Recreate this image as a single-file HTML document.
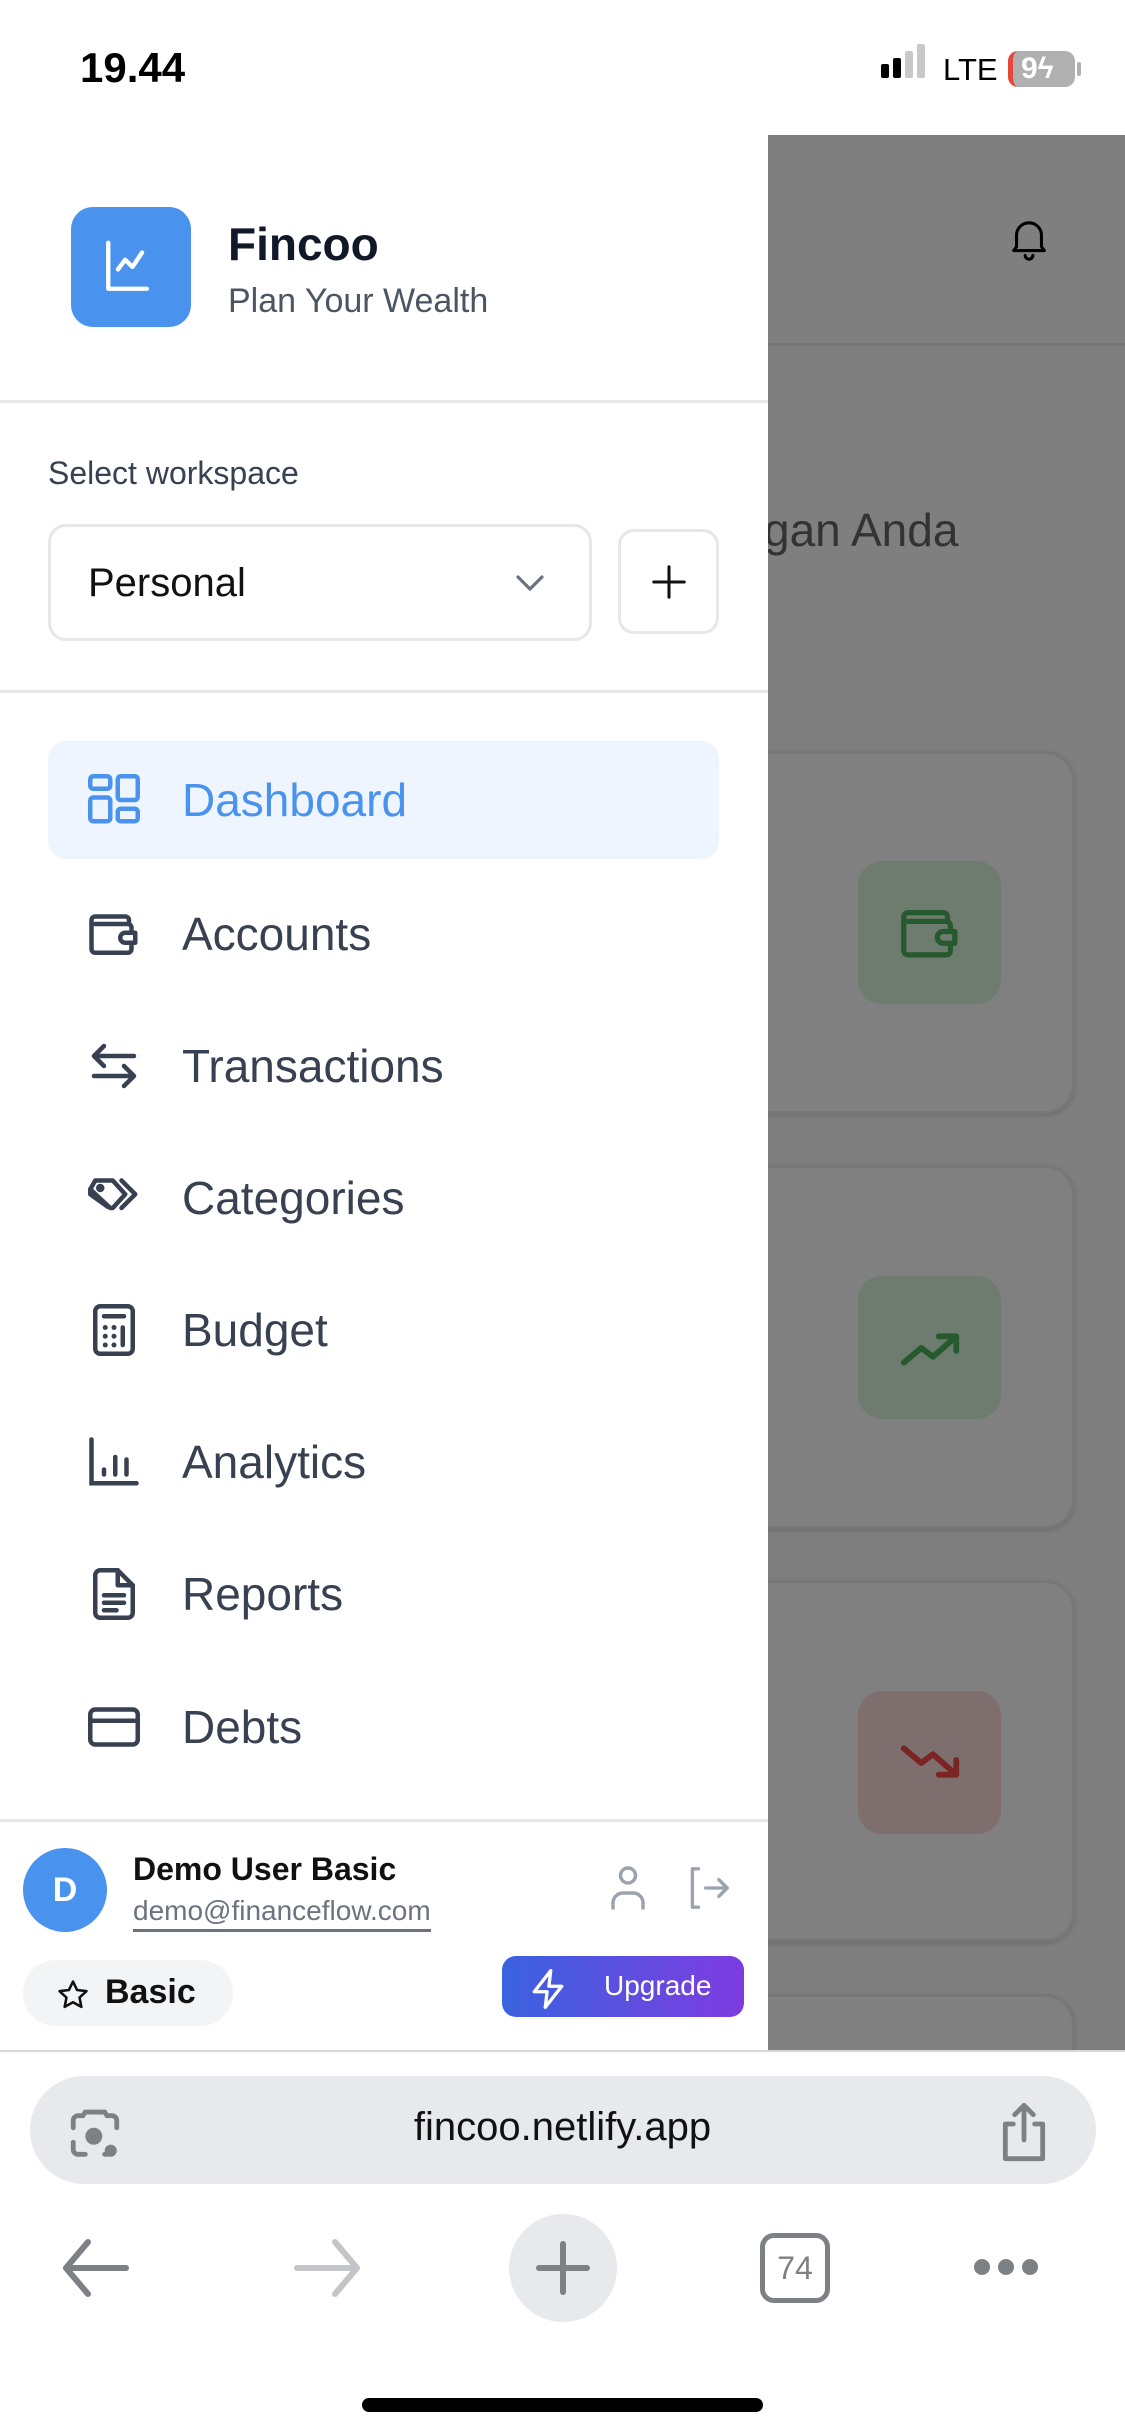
<!DOCTYPE html>
<html><head><meta charset="utf-8"><style>
*{margin:0;padding:0;box-sizing:border-box}
body{width:1125px;height:2436px;position:relative;overflow:hidden;background:#fff;font-family:"Liberation Sans",sans-serif;color:#374151}
.abs{position:absolute}
.gray{left:768px;top:135px;width:357px;height:1916px;background:#7f7f7f;overflow:hidden}
.card{position:absolute;left:-300px;width:607px;background:#808080;border:3px solid #777;border-radius:30px;box-shadow:0 2px 6px rgba(0,0,0,.15)}
.ibox{position:absolute;width:143px;height:143px;border-radius:24px;display:flex;align-items:center;justify-content:center}
.panel{left:0;top:135px;width:768px;height:1916px;background:#fff}
.nav{position:absolute;left:48px;width:671px;height:118px;border-radius:18px;display:flex;align-items:center}
.nav svg{position:absolute;left:36px;width:60px;height:60px}
.nav span{position:absolute;left:134px;font-size:46px;color:#374151}
</style></head><body>
<!-- status bar -->
<div class="abs" style="left:80px;top:44px;font-size:42px;font-weight:bold;color:#000">19.44</div>
<div class="abs" style="left:881px;top:64px;width:8px;height:14px;background:#000;border-radius:2px"></div>
<div class="abs" style="left:893px;top:58px;width:8px;height:20px;background:#000;border-radius:2px"></div>
<div class="abs" style="left:905px;top:51px;width:8px;height:27px;background:#c8c8c8;border-radius:2px"></div>
<div class="abs" style="left:917px;top:44px;width:8px;height:34px;background:#c8c8c8;border-radius:2px"></div>
<div class="abs" style="left:943px;top:52px;font-size:31px;color:#000">LTE</div>
<div class="abs" style="left:1008px;top:51px;width:67px;height:36px;background:#b0b0b0;border-radius:10px;border-left:5px solid #e5483a;color:#fff;font-size:30px;font-weight:bold;line-height:36px;padding-left:8px">9ϟ</div>
<div class="abs" style="left:1077px;top:62px;width:4px;height:14px;background:#b0b0b0;border-radius:2px"></div>

<!-- gray background app -->
<div class="abs gray">
  <div class="abs" style="left:0;top:208px;width:357px;height:3px;background:#777"></div>
  <svg class="abs" style="left:238px;top:80px" width="46" height="52" viewBox="0 0 24 26" fill="none" stroke="#000" stroke-width="1.6" stroke-linecap="round" stroke-linejoin="round"><path d="M4 18h16l-1.5-2V10a6.5 6.5 0 0 0-13 0v6z"/><path d="M10 20.5a2 2 0 0 0 4 0"/></svg>
  <div class="abs" style="left:-4px;top:368px;font-size:46px;color:#333">gan Anda</div>
  <div class="card" style="top:616px;height:363px">
    <div class="ibox" style="left:387px;top:107px;background:#6e7b6f"><svg width="70" height="70" viewBox="0 0 24 24" fill="none" stroke="#265a2e" stroke-width="1.8" stroke-linecap="round" stroke-linejoin="round"><path d="M3 6.5A1.5 1.5 0 0 1 4.5 5h12A1.5 1.5 0 0 1 18 6.5V8H4.5M3 6.5V18a1.5 1.5 0 0 0 1.5 1.5h13A1.5 1.5 0 0 0 19 18v-2.5M19 11v-1.5a1.5 1.5 0 0 0-1.5-1.5"/><path d="M16.5 11.5h4v4h-4a2 2 0 0 1 0-4z"/></svg></div>
  </div>
  <div class="card" style="top:1030px;height:364px">
    <div class="ibox" style="left:387px;top:108px;background:#6e7b6f"><svg width="70" height="70" viewBox="0 0 24 24" fill="none" stroke="#265a2e" stroke-width="2" stroke-linecap="round" stroke-linejoin="round"><path d="M3 17l6-5 4 3 8-7M15 8h6v5"/></svg></div>
  </div>
  <div class="card" style="top:1445px;height:362px">
    <div class="ibox" style="left:387px;top:108px;background:#7e6e6e"><svg width="70" height="70" viewBox="0 0 24 24" fill="none" stroke="#7a2424" stroke-width="2" stroke-linecap="round" stroke-linejoin="round"><path d="M3 7l6 5 4-3 8 7M15 16h6v-5"/></svg></div>
  </div>
  <div class="card" style="top:1859px;height:300px"></div>
</div>

<!-- side panel -->
<div class="abs panel">
  <div class="abs" style="left:71px;top:72px;width:120px;height:120px;border-radius:22px;background:#4993ee">
    <svg class="abs" style="left:30px;top:28px" width="58" height="64" viewBox="0 0 24 26" fill="none" stroke="#fff" stroke-width="1.8" stroke-linecap="round" stroke-linejoin="round"><path d="M3 3v19h16"/><path d="M7 14l3-4 3 3 4-6"/></svg>
  </div>
  <div class="abs" style="left:228px;top:82px;font-size:46px;font-weight:bold;color:#111827">Fincoo</div>
  <div class="abs" style="left:228px;top:147px;font-size:34px;color:#4b5563">Plan Your Wealth</div>
  <div class="abs" style="left:0;top:265px;width:768px;height:3px;background:#e5e7eb"></div>
  <div class="abs" style="left:48px;top:320px;font-size:32px;color:#374151">Select workspace</div>
  <div class="abs" style="left:48px;top:389px;width:544px;height:117px;border:3px solid #e5e7eb;border-radius:18px"></div>
  <div class="abs" style="left:88px;top:426px;font-size:40px;color:#111">Personal</div>
  <svg class="abs" style="left:514px;top:436px" width="32" height="22" viewBox="0 0 16 11" fill="none" stroke="#6b7280" stroke-width="1.6" stroke-linecap="round"><path d="M2 3l6 6 6-6"/></svg>
  <div class="abs" style="left:618px;top:394px;width:101px;height:105px;border:3px solid #e5e7eb;border-radius:16px"></div>
  <svg class="abs" style="left:650px;top:428px" width="38" height="38" viewBox="0 0 20 20" fill="none" stroke="#111" stroke-width="1.6" stroke-linecap="round"><path d="M10 2v16M2 10h16"/></svg>
  <div class="abs" style="left:0;top:555px;width:768px;height:3px;background:#e5e7eb"></div>

  <div class="nav" style="top:606px;background:#eef5fe">
    <svg viewBox="0 0 24 24" fill="none" stroke="#4993ee" stroke-width="1.8"><rect x="2.5" y="2.5" width="8" height="5" rx="1.2"/><rect x="2.5" y="11" width="8" height="9.5" rx="1.2"/><rect x="13.5" y="2.5" width="8" height="9.5" rx="1.2"/><rect x="13.5" y="15.5" width="8" height="5" rx="1.2"/></svg>
    <span style="color:#4993ee">Dashboard</span></div>
  <div class="nav" style="top:740px">
    <svg viewBox="0 0 24 24" fill="none" stroke="#374151" stroke-width="1.8" stroke-linecap="round" stroke-linejoin="round"><path d="M3 6.5A1.5 1.5 0 0 1 4.5 5h12A1.5 1.5 0 0 1 18 6.5V8H4.5M3 6.5V18a1.5 1.5 0 0 0 1.5 1.5h13A1.5 1.5 0 0 0 19 18v-2.5M19 11v-1.5a1.5 1.5 0 0 0-1.5-1.5"/><path d="M16.5 11.5h4v4h-4a2 2 0 0 1 0-4z"/></svg>
    <span>Accounts</span></div>
  <div class="nav" style="top:872px">
    <svg viewBox="0 0 24 24" fill="none" stroke="#374151" stroke-width="1.8" stroke-linecap="round" stroke-linejoin="round"><path d="M20 8H4M8 4L4 8l4 4M4 16h16M16 12l4 4-4 4"/></svg>
    <span>Transactions</span></div>
  <div class="nav" style="top:1004px">
    <svg viewBox="0 0 24 24" fill="none" stroke="#374151" stroke-width="1.8" stroke-linecap="round" stroke-linejoin="round"><path d="M2.5 8.5l2-3.5h7l5 5.5-5 5.5h-1z M2.5 8.5v2l7 5"/><circle cx="6.5" cy="8" r="0.8" fill="#374151"/><path d="M15 5l5.5 5.5L15 16"/></svg>
    <span>Categories</span></div>
  <div class="nav" style="top:1136px">
    <svg viewBox="0 0 24 24" fill="none" stroke="#374151" stroke-width="1.8" stroke-linecap="round" stroke-linejoin="round"><rect x="4.5" y="2.5" width="15" height="19" rx="2"/><path d="M8 6.5h8"/><g fill="#374151" stroke="none"><circle cx="8.5" cy="11" r="1"/><circle cx="12" cy="11" r="1"/><circle cx="8.5" cy="14.5" r="1"/><circle cx="12" cy="14.5" r="1"/><circle cx="8.5" cy="18" r="1"/><circle cx="12" cy="18" r="1"/></g><path d="M15.5 11v7"/></svg>
    <span>Budget</span></div>
  <div class="nav" style="top:1268px">
    <svg viewBox="0 0 24 24" fill="none" stroke="#374151" stroke-width="1.8" stroke-linecap="round"><path d="M3 3v17.5h18M8 17v-2M12.5 17V10M17 17v-6"/></svg>
    <span>Analytics</span></div>
  <div class="nav" style="top:1400px">
    <svg viewBox="0 0 24 24" fill="none" stroke="#374151" stroke-width="1.8" stroke-linecap="round" stroke-linejoin="round"><path d="M13.5 2.5H6.5a2 2 0 0 0-2 2v15a2 2 0 0 0 2 2h11a2 2 0 0 0 2-2v-11z"/><path d="M13.5 2.5v6h6M8 12.5h8M8 15.5h8M8 18.5h5"/></svg>
    <span>Reports</span></div>
  <div class="nav" style="top:1533px">
    <svg viewBox="0 0 24 24" fill="none" stroke="#374151" stroke-width="1.8"><rect x="2.5" y="5" width="19" height="14" rx="2"/><path d="M2.5 9.5h19"/></svg>
    <span>Debts</span></div>

  <div class="abs" style="left:0;top:1684px;width:768px;height:3px;background:#e5e7eb"></div>
  <div class="abs" style="left:23px;top:1713px;width:84px;height:84px;border-radius:50%;background:#4993ee;color:#fff;font-size:34px;font-weight:bold;text-align:center;line-height:84px">D</div>
  <div class="abs" style="left:133px;top:1716px;font-size:32px;font-weight:bold;color:#111">Demo User Basic</div>
  <div class="abs" style="left:133px;top:1760px;font-size:28px;color:#6b7280;border-bottom:3px solid #6b7280;padding-bottom:2px">demo@financeflow.com</div>
  <svg class="abs" style="left:608px;top:1728px" width="40" height="50" viewBox="0 0 16 20" fill="none" stroke="#9ca3af" stroke-width="1.4" stroke-linecap="round"><circle cx="8" cy="5" r="3"/><path d="M2 18v-2a4 4 0 0 1 4-4h4a4 4 0 0 1 4 4v2"/></svg>
  <svg class="abs" style="left:684px;top:1728px" width="48" height="50" viewBox="0 0 20 20" fill="none" stroke="#9ca3af" stroke-width="1.4" stroke-linecap="round" stroke-linejoin="round"><path d="M6 2H3.5v16H6M9 10h9M14.5 6.5L18 10l-3.5 3.5"/></svg>
  <div class="abs" style="left:23px;top:1825px;width:210px;height:66px;border-radius:33px;background:#f3f4f6"></div>
  <svg class="abs" style="left:56px;top:1843px" width="34" height="34" viewBox="0 0 24 24" fill="none" stroke="#111" stroke-width="1.8" stroke-linejoin="round"><path d="M12 2.5l2.9 6 6.6.8-4.9 4.5 1.3 6.6L12 17.1l-5.9 3.3 1.3-6.6-4.9-4.5 6.6-.8z"/></svg>
  <div class="abs" style="left:105px;top:1838px;font-size:34px;font-weight:bold;color:#111">Basic</div>
  <div class="abs" style="left:502px;top:1821px;width:242px;height:61px;border-radius:14px;background:linear-gradient(90deg,#3a63e0,#7e3ce0)"></div>
  <svg class="abs" style="left:526px;top:1832px" width="44" height="44" viewBox="0 0 24 24" fill="none" stroke="#fff" stroke-width="1.8" stroke-linejoin="round"><path d="M13.5 2L4.5 13.5h7l-1 8.5 9-11.5h-7z"/></svg>
  <div class="abs" style="left:604px;top:1835px;font-size:28px;color:#fff">Upgrade</div>
</div>

<!-- browser bar -->
<div class="abs" style="left:0;top:2050px;width:1125px;height:2px;background:#d8d8d8"></div>
<div class="abs" style="left:30px;top:2076px;width:1066px;height:108px;border-radius:54px;background:#e8e9ec"></div>
<svg class="abs" style="left:66px;top:2106px" width="58" height="58" viewBox="0 0 24 24" fill="none" stroke="#7d8085" stroke-width="2" stroke-linecap="round"><path d="M3 9V6a2 2 0 0 1 2-2h2l1-1.5h8L17 4h2a2 2 0 0 1 2 2v3M3 15v3a2 2 0 0 0 2 2h3M16 20h1"/><circle cx="11.5" cy="12.5" r="2.5" fill="#7d8085"/><circle cx="18.5" cy="18.5" r="1.5" fill="#7d8085"/></svg>
<div class="abs" style="left:0;top:2105px;width:1125px;text-align:center;font-size:40px;color:#111">fincoo.netlify.app</div>
<svg class="abs" style="left:996px;top:2100px" width="56" height="64" viewBox="0 0 20 24" fill="none" stroke="#7d8085" stroke-width="1.8" stroke-linecap="round" stroke-linejoin="round"><path d="M6 9H3v13h14V9h-3M10 15V2M6.5 5.5L10 2l3.5 3.5"/></svg>
<svg class="abs" style="left:60px;top:2236px" width="70" height="64" viewBox="0 0 35 32" fill="none" stroke="#7d8085" stroke-width="3" stroke-linecap="round" stroke-linejoin="round"><path d="M33 16H3M14 3L3 16l11 13"/></svg>
<svg class="abs" style="left:293px;top:2236px" width="70" height="64" viewBox="0 0 35 32" fill="none" stroke="#c4c5c8" stroke-width="3" stroke-linecap="round" stroke-linejoin="round"><path d="M2 16h30M21 3l11 13-11 13"/></svg>
<div class="abs" style="left:509px;top:2214px;width:108px;height:108px;border-radius:50%;background:#e8e9ec"></div>
<svg class="abs" style="left:535px;top:2240px" width="56" height="56" viewBox="0 0 28 28" stroke="#7d8085" stroke-width="3" stroke-linecap="round"><path d="M14 2v24M2 14h24"/></svg>
<div class="abs" style="left:760px;top:2233px;width:70px;height:70px;border:5px solid #7d8085;border-radius:14px;text-align:center;line-height:60px;font-size:32px;color:#7d8085">74</div>
<div class="abs" style="left:974px;top:2259px;width:16px;height:16px;border-radius:50%;background:#7d8085"></div>
<div class="abs" style="left:998px;top:2259px;width:16px;height:16px;border-radius:50%;background:#7d8085"></div>
<div class="abs" style="left:1022px;top:2259px;width:16px;height:16px;border-radius:50%;background:#7d8085"></div>
<div class="abs" style="left:362px;top:2398px;width:401px;height:14px;border-radius:7px;background:#000"></div>
</body></html>
